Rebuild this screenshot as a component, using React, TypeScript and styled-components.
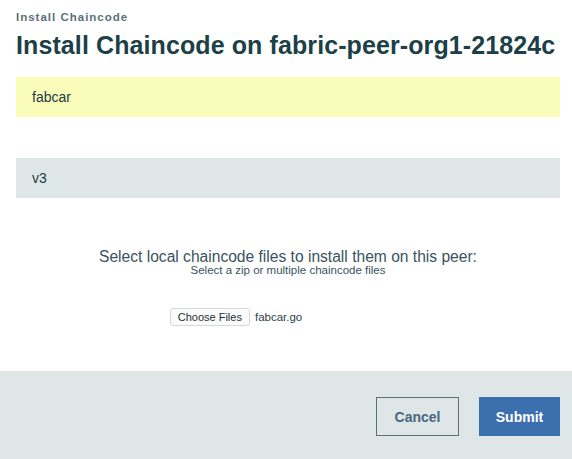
import React from 'react'
import styled, { createGlobalStyle } from 'styled-components'

const GlobalStyle = createGlobalStyle`
  html, body {
    margin: 0;
    padding: 0;
    background: #ffffff;
  }
  body {
    font-family: 'Liberation Sans', Arial, sans-serif;
  }
`

const Modal = styled.div`
  width: 572px;
  height: 459px;
  display: flex;
  flex-direction: column;
  background: #ffffff;
`

const Body = styled.div`
  flex: 1;
  padding: 11px 12px 0 16px;
  display: flex;
  flex-direction: column;
`

const Eyebrow = styled.div`
  font-size: 11.5px;
  font-weight: bold;
  color: #5b6f76;
  letter-spacing: 1px;
  line-height: 13px;
`

const Title = styled.h1`
  margin: 6px 0 0;
  font-size: 25px;
  font-weight: bold;
  letter-spacing: 0.1px;
  line-height: 30px;
  color: #1c3f48;
`

const Field = styled.div<{ $tone: 'active' | 'plain' }>`
  height: 40px;
  display: flex;
  align-items: center;
  padding-left: 16px;
  font-size: 14px;
  color: #1f3a44;
  background: ${(p) => (p.$tone === 'active' ? '#fafdb9' : '#dfe6e8')};
`

const FirstField = styled(Field)`
  margin-top: 17px;
`

const SecondField = styled(Field)`
  margin-top: 41px;
`

const Upload = styled.div`
  margin-top: 51px;
  display: flex;
  flex-direction: column;
  align-items: center;
  color: #3a535d;
`

const UploadLead = styled.div`
  font-size: 15.6px;
  line-height: 16px;
`

const UploadHint = styled.div`
  font-size: 11.5px;
  line-height: 10px;
`

const FileRow = styled.div`
  margin-top: 33px;
  margin-left: -104px;
  display: flex;
  align-items: center;
  gap: 5px;
  font-size: 11.5px;
  color: #2b3f47;
`

const ChooseButton = styled.span`
  display: inline-flex;
  align-items: center;
  box-sizing: border-box;
  height: 18px;
  padding: 0 7px;
  border: 1px solid #d3d8da;
  border-radius: 3px;
  background: #fbfbfb;
  font-size: 11px;
  color: #1f2f35;
`

const Footer = styled.div`
  height: 88px;
  background: #dfe6e8;
  display: flex;
  justify-content: flex-end;
  align-items: flex-start;
  gap: 20px;
  padding: 26px 12px 0 0;
  box-sizing: border-box;
`

const Button = styled.button<{ $primary?: boolean }>`
  width: ${(p) => (p.$primary ? '81px' : '83px')};
  height: 39px;
  box-sizing: border-box;
  font-family: 'Liberation Sans', Arial, sans-serif;
  font-size: 14px;
  font-weight: bold;
  cursor: pointer;
  border: 1px solid ${(p) => (p.$primary ? '#3c6fae' : '#5d7178')};
  background: ${(p) => (p.$primary ? '#3c6fae' : 'transparent')};
  color: ${(p) => (p.$primary ? '#ffffff' : '#4a6680')};
`

const App: React.FC = () => {
  return (
    <>
      <GlobalStyle />
      <Modal>
        <Body>
          <Eyebrow>Install Chaincode</Eyebrow>
          <Title>Install Chaincode on fabric-peer-org1-21824c</Title>
          <FirstField $tone="active">fabcar</FirstField>
          <SecondField $tone="plain">v3</SecondField>
          <Upload>
            <UploadLead>Select local chaincode files to install them on this peer:</UploadLead>
            <UploadHint>Select a zip or multiple chaincode files</UploadHint>
            <FileRow>
              <ChooseButton>Choose Files</ChooseButton>
              fabcar.go
            </FileRow>
          </Upload>
        </Body>
        <Footer>
          <Button>Cancel</Button>
          <Button $primary>Submit</Button>
        </Footer>
      </Modal>
    </>
  )
}

export default App
